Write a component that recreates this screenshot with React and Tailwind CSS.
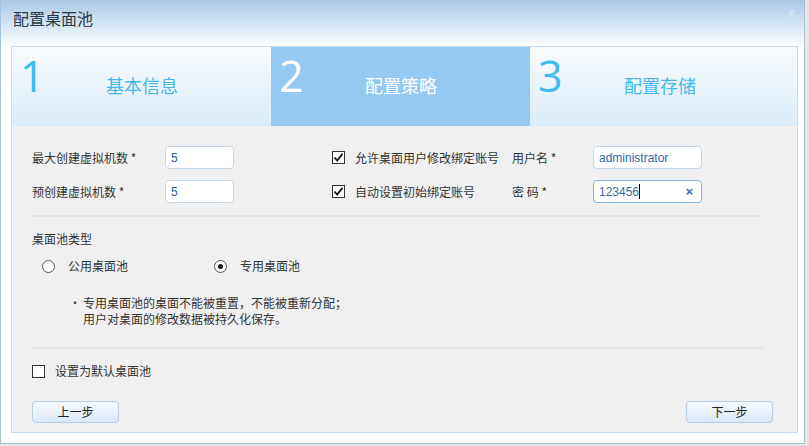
import React from "react";

const cjk = { fontFamily: '"Microsoft YaHei", "Noto Sans CJK SC", "Noto Sans", sans-serif' };
const latin = { fontFamily: '"Liberation Sans", Arial, sans-serif' };

const steps = [
  { n: "1", label: "基本信息" },
  { n: "2", label: "配置策略", active: true },
  { n: "3", label: "配置存储" },
];

const Check = ({ checked }) => (
  <span className="w-[13px] h-[13px] border border-[#333] bg-white flex items-center justify-center shrink-0">
    {checked && (
      <svg width="11" height="11" viewBox="0 0 11 11">
        <path d="M1.5 5.5 L4.2 8.5 L9.5 1.8" fill="none" stroke="#111" strokeWidth="1.8" />
      </svg>
    )}
  </span>
);

const Radio = ({ checked }) => (
  <span className="w-[13px] h-[13px] rounded-full border border-[#555] bg-white flex items-center justify-center shrink-0">
    {checked && <span className="w-[5px] h-[5px] rounded-full bg-[#111]" />}
  </span>
);

const Btn = ({ children }) => (
  <button className="w-[87px] h-[22px] rounded-[4px] border border-[#b7cde5] bg-gradient-to-b from-[#f6faff] to-[#dbe8f7] text-[12px] text-[#222]">
    {children}
  </button>
);

const App = () => {
  return (
    <div className="w-[809px] h-[446px] bg-[#e6e6e6] overflow-hidden text-[#333]" style={cjk}>
      <div className="w-[805px] h-[444px] border-l border-r border-b border-[#a6c2de] bg-white flex flex-col">
        {/* title bar */}
        <div className="h-[46px] shrink-0 bg-gradient-to-b from-[#a8c9e8] to-[#fdfeff] flex items-start justify-between">
          <p className="text-[16px] text-[#2b3a4a] leading-none pl-[12px] pt-[10px]">配置桌面池</p>
          <span className="text-[13px] text-[#dce8f4] leading-none pr-[9px] pt-[6px]" style={latin}>x</span>
        </div>

        {/* panel */}
        <div className="ml-[10px] w-[787px] h-[387px] border border-[#c8dced] flex flex-col">
          <div className="h-[79px] shrink-0 flex bg-gradient-to-b from-[#f8fbfe] to-[#dbecf8]">
            {steps.map((s, i) => (
              <div
                key={s.n}
                className={`${i === 2 ? "w-[267px]" : "w-[259px]"} h-full flex ${s.active ? "bg-[#95c9f1]" : ""}`}
              >
                <span
                  className={`w-[94px] pl-[8px] pt-[7px] text-[43px] leading-none font-normal ${s.active ? "text-white" : "text-[#3ebcf0]"}`}
                  style={{ fontFamily: '"Open Sans", "Noto Sans", sans-serif' }}
                >
                  {s.n}
                </span>
                <span className={`pt-[29px] text-[18px] leading-none ${s.active ? "text-white" : "text-[#47b8e8]"}`}>
                  {s.label}
                </span>
              </div>
            ))}
          </div>

          <div className="flex-1 bg-[#f0f0f0] pl-[20px] pr-[24px] pt-[20px] text-[12px]">
            {/* row 1 */}
            <div className="flex items-center h-[23px]">
              <span className="w-[133px]">最大创建虚拟机数 *</span>
              <div className="w-[69px] h-[23px] rounded-[4px] border border-[#c4d8ec] bg-white flex items-center pl-[5px] text-[12px] text-[#2c5f8e]" style={latin}>5</div>
              <span className="ml-[98px]"><Check checked /></span>
              <span className="ml-[10px] w-[157px]">允许桌面用户修改绑定账号</span>
              <span className="w-[81px]">用户名 *</span>
              <div className="w-[109px] h-[23px] rounded-[4px] border border-[#c4d8ec] bg-white flex items-center pl-[5px] text-[12px] text-[#2f6ca3]" style={latin}>administrator</div>
            </div>
            {/* row 2 */}
            <div className="flex items-center h-[23px] mt-[11px]">
              <span className="w-[133px]">预创建虚拟机数 *</span>
              <div className="w-[69px] h-[23px] rounded-[4px] border border-[#c4d8ec] bg-white flex items-center pl-[5px] text-[12px] text-[#2c5f8e]" style={latin}>5</div>
              <span className="ml-[98px]"><Check checked /></span>
              <span className="ml-[10px] w-[157px]">自动设置初始绑定账号</span>
              <span className="w-[81px]">密 码 *</span>
              <div className="w-[109px] h-[23px] rounded-[4px] border border-[#7fb3e4] bg-white flex items-center pl-[5px] pr-[8px] text-[12px] text-[#2f6ca3]" style={latin}>
                <span>123456</span>
                <span className="w-px h-[15px] bg-black" />
                <span className="ml-auto text-[13px] font-bold text-[#3b6f9f]">×</span>
              </div>
            </div>

            <div className="h-[2px] bg-[#e3e6ea] mt-[12px] mr-[10px]" />

            <p className="mt-[14px] leading-[16px]">桌面池类型</p>
            <div className="flex items-center h-[16px] mt-[11px] pl-[10px]">
              <Radio />
              <span className="ml-[13px] w-[146px]">公用桌面池</span>
              <Radio checked />
              <span className="ml-[13px]">专用桌面池</span>
            </div>

            <div className="flex mt-[21px] pl-[37px] leading-[16px]">
              <span className="w-[14px]">•</span>
              <div>
                <p>专用桌面池的桌面不能被重置，不能被重新分配；</p>
                <p>用户对桌面的修改数据被持久化保存。</p>
              </div>
            </div>

            <div className="h-[2px] bg-[#e3e6ea] mt-[20px] mr-[10px]" />

            <div className="flex items-center h-[16px] mt-[14px]">
              <Check />
              <span className="ml-[10px]">设置为默认桌面池</span>
            </div>

            <div className="flex justify-between mt-[22px]">
              <Btn>上一步</Btn>
              <Btn>下一步</Btn>
            </div>
          </div>
        </div>
      </div>
    </div>
  );
};

export default App;
